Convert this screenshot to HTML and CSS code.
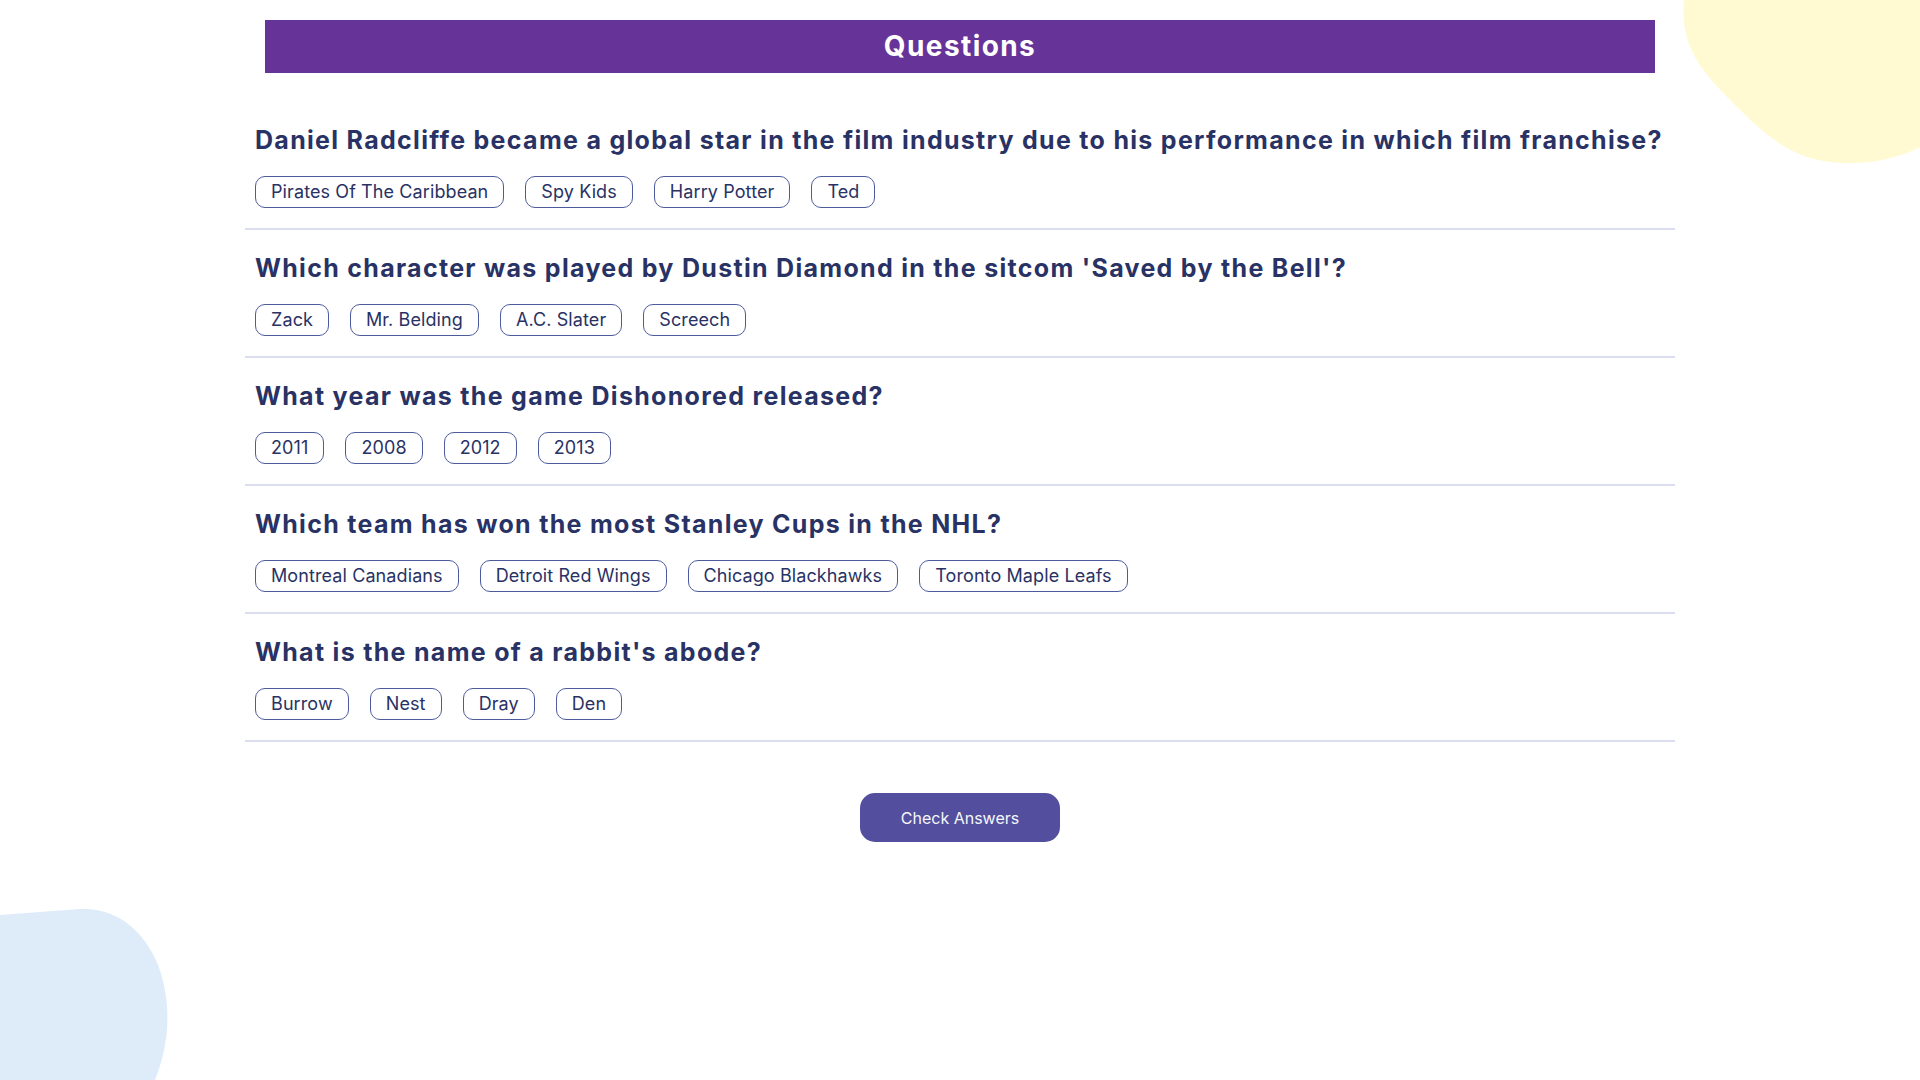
FILE: index.html
```html
<!DOCTYPE html>
<html lang="en">
<head>
<meta charset="utf-8">
<title>Quizzical</title>
<link rel="stylesheet" href="styles.css">
</head>
<body>
<svg class="blob blob-yellow" width="240" height="170" viewBox="1680 0 240 170" aria-hidden="true">
  <path d="M1684 0 C1680 45 1700 70 1730 100 C1770 140 1795 163 1850 163 C1880 163 1905 155 1920 147 L1920 0 Z" fill="#FFFAD1"/>
</svg>
<svg class="blob blob-blue" width="172" height="175" viewBox="0 905 172 175" aria-hidden="true">
  <path d="M0 915 L80 909 C120 907 146 935 158 965 C171 1000 171 1040 155 1080 L0 1080 Z" fill="#DEEBF8"/>
</svg>
<main class="quiz">
  <h1 class="quiz-title">Questions</h1>

  <section class="question">
    <h2 class="question-text">Daniel Radcliffe became a global star in the film industry due to his performance in which film franchise?</h2>
    <div class="answers">
      <button class="answer">Pirates Of The Caribbean</button>
      <button class="answer">Spy Kids</button>
      <button class="answer">Harry Potter</button>
      <button class="answer">Ted</button>
    </div>
  </section>

  <section class="question">
    <h2 class="question-text">Which character was played by Dustin Diamond in the sitcom 'Saved by the Bell'?</h2>
    <div class="answers">
      <button class="answer">Zack</button>
      <button class="answer">Mr. Belding</button>
      <button class="answer">A.C. Slater</button>
      <button class="answer">Screech</button>
    </div>
  </section>

  <section class="question">
    <h2 class="question-text">What year was the game Dishonored released?</h2>
    <div class="answers">
      <button class="answer">2011</button>
      <button class="answer">2008</button>
      <button class="answer">2012</button>
      <button class="answer">2013</button>
    </div>
  </section>

  <section class="question">
    <h2 class="question-text">Which team has won the most Stanley Cups in the NHL?</h2>
    <div class="answers">
      <button class="answer">Montreal Canadians</button>
      <button class="answer">Detroit Red Wings</button>
      <button class="answer">Chicago Blackhawks</button>
      <button class="answer">Toronto Maple Leafs</button>
    </div>
  </section>

  <section class="question">
    <h2 class="question-text">What is the name of a rabbit's abode?</h2>
    <div class="answers">
      <button class="answer">Burrow</button>
      <button class="answer">Nest</button>
      <button class="answer">Dray</button>
      <button class="answer">Den</button>
    </div>
  </section>

  <div class="actions">
    <button class="check-btn">Check Answers</button>
  </div>
</main>
</body>
</html>
```
FILE: styles.css
```css
* { box-sizing: border-box; }

html, body {
  margin: 0;
  padding: 0;
  background: #ffffff;
  height: 100%;
  overflow: hidden;
}

body {
  position: relative;
  font-family: Inter, "Liberation Sans", sans-serif;
  color: #293264;
}

.blob {
  position: absolute;
  z-index: 0;
}
.blob-yellow { top: 0; right: 0; }
.blob-blue { left: 0; bottom: 0; }

.quiz {
  position: relative;
  z-index: 1;
  width: 1430px;
  margin: 0 auto;
  padding-top: 20px;
}

.quiz-title {
  margin: 0 20px 29px;
  height: 53px;
  background: #663399;
  color: #ffffff;
  font-family: Inter, sans-serif;
  font-size: 28px;
  font-weight: 700;
  letter-spacing: 1.4px;
  line-height: 53px;
  text-align: center;
}

.question {
  padding: 23px 10px 0;
  border-bottom: 2px solid #DBDEF0;
}

.question-text {
  margin: 0;
  font-family: Inter, sans-serif;
  font-size: 25px;
  font-weight: 700;
  letter-spacing: 1.3px;
  line-height: 31px;
  color: #293264;
  white-space: nowrap;
}

.answers {
  display: flex;
  gap: 21px;
  margin-top: 20px;
  padding-bottom: 20px;
}

.answer {
  height: 32px;
  padding: 0 15px;
  border: 1px solid #4D5B9E;
  border-radius: 10px;
  background: transparent;
  font-family: Inter, sans-serif;
  font-size: 18px;
  font-weight: 400;
  letter-spacing: 0.1px;
  line-height: 30px;
  color: #293264;
}

.actions {
  display: flex;
  justify-content: center;
  margin-top: 51px;
}

.check-btn {
  width: 200px;
  height: 49px;
  border: none;
  border-radius: 15px;
  background: #534F9E;
  color: #F5F7FB;
  font-family: Inter, sans-serif;
  font-size: 16px;
  font-weight: 400;
}
```
